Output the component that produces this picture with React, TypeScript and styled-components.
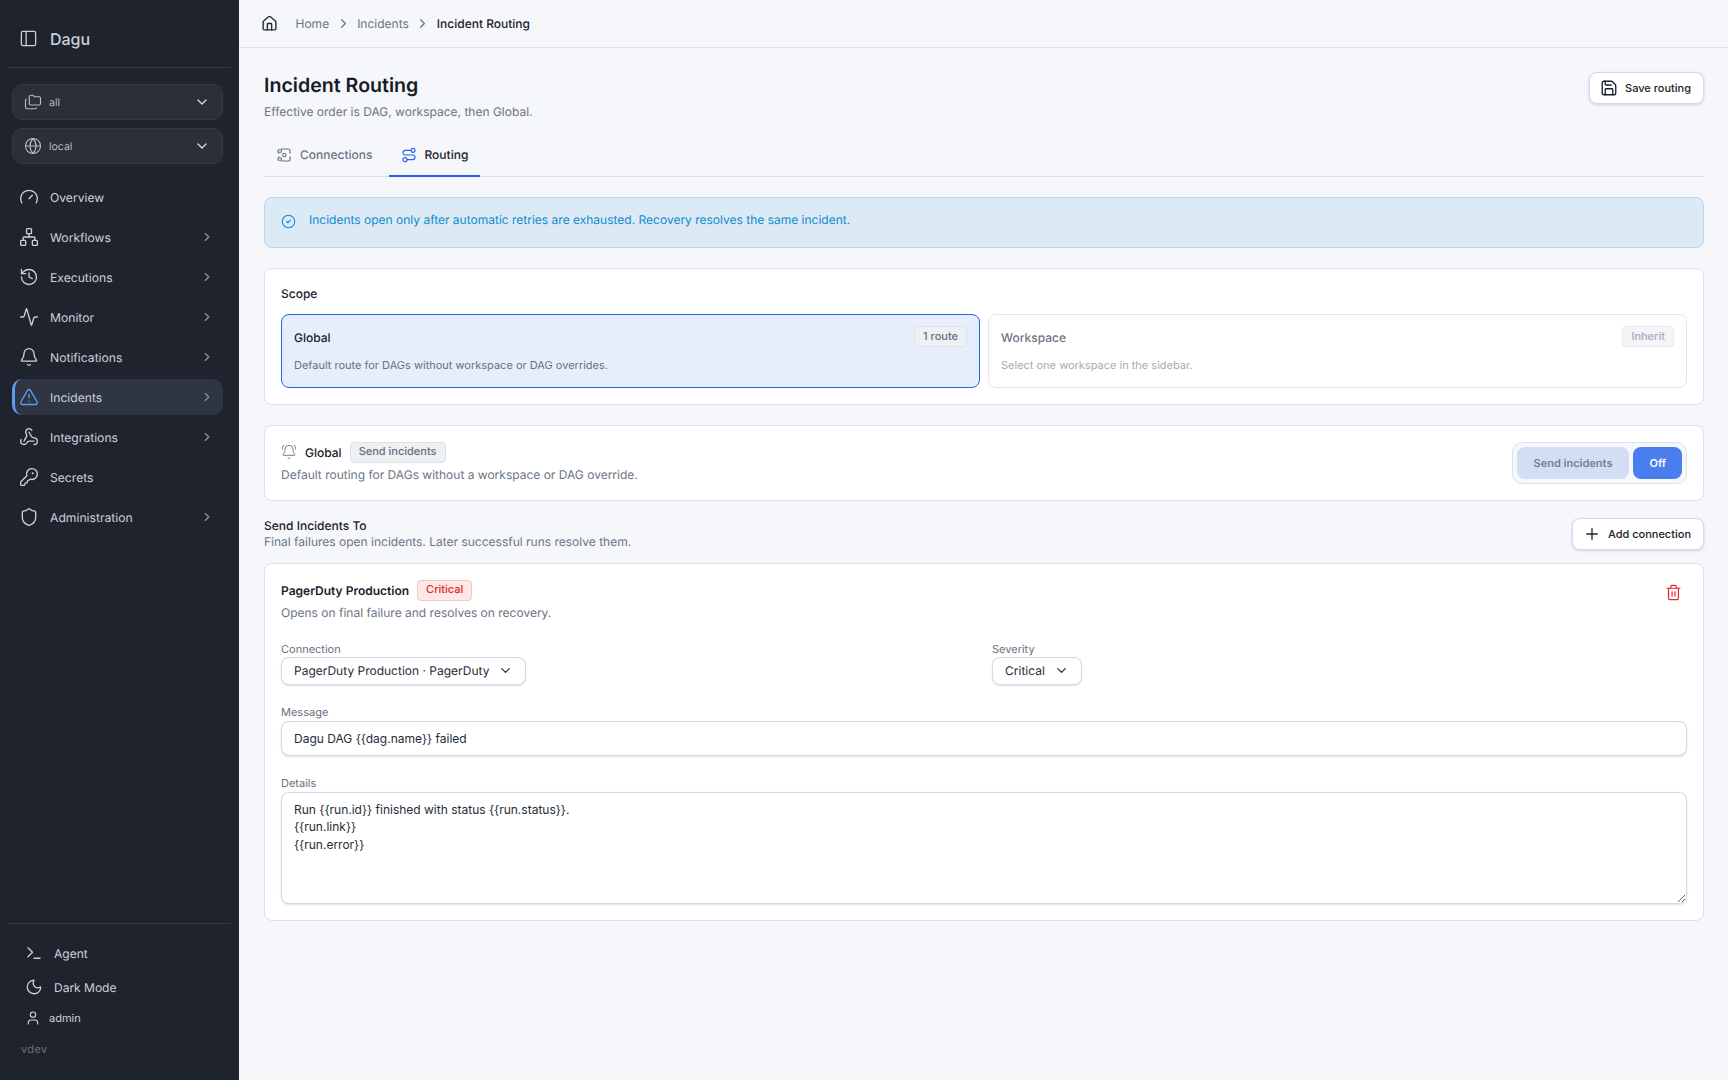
import React from 'react';
import styled, { createGlobalStyle } from 'styled-components';
import {
  Activity, Bell, BellRing, ChevronDown, ChevronRight, CircleCheck, Folders, Gauge, Globe, History, House,
  KeyRound, Moon, Network, PanelLeft, Plus, Route, Save, Shield, Terminal, Trash2, TriangleAlert, User, Webhook,
} from 'lucide-react';

const GlobalStyle = createGlobalStyle`
  * { box-sizing: border-box; }
  html, body { margin: 0; height: 100%; }
  body {
    font-family: Inter, "Liberation Sans", sans-serif;
    background: #f5f7fb;
    color: #171c26;
    text-rendering: geometricPrecision;
    -webkit-font-smoothing: antialiased;
  }
`;

const Layout = styled.div`
  display: flex;
  height: 1080px;
  overflow: hidden;
`;

const Sidebar = styled.aside`
  width: 239px;
  flex: none;
  background: #1f232d;
  color: #cdd1d9;
  display: flex;
  flex-direction: column;
`;

const Brand = styled.div`
  height: 68px;
  flex: none;
  margin: 0 8px;
  padding: 10px 0 0 10.6px;
  display: flex;
  align-items: center;
  gap: 12.4px;
  border-bottom: 1px solid #333844;
  font-size: 16px;
  font-weight: 500;
`;

const SwitcherStack = styled.div`
  display: flex;
  flex-direction: column;
  gap: 8px;
  padding: 16px 16px 0 12px;
`;

const Switcher = styled.div`
  height: 36px;
  padding: 0 12px 0 11px;
  display: flex;
  align-items: center;
  gap: 7px;
  background: #2a2f3a;
  border: 1px solid #343945;
  border-radius: 10px;
  font-size: 10.5px;
  color: #b8bcc5;
  svg:last-child { margin-left: auto; color: #d5d8de; }
`;

const Nav = styled.nav`
  display: flex;
  flex-direction: column;
  gap: 4px;
  padding: 15px 16px 0 12px;
`;

const NavItem = styled.div<{ $active?: boolean }>`
  height: 36px;
  padding: 0 9px 0 4px;
  display: flex;
  align-items: center;
  gap: 11px;
  font-size: 12.15px;
  border-radius: 10px;
  border-left: 3px solid ${(p) => (p.$active ? '#5d9cf0' : 'transparent')};
  color: #cdd1d9;
  background: ${(p) => (p.$active ? '#2f3542' : 'transparent')};
  > svg:first-child { color: ${(p) => (p.$active ? '#5d9cf0' : '#cdd1d9')}; }
`;

const NavArrow = styled(ChevronRight)`
  margin-left: auto;
  color: #8d919b;
`;

const SideFooter = styled.div`
  margin: auto 8px 0;
  padding: 12px 0 24px 17px;
  border-top: 1px solid #333844;
  display: flex;
  flex-direction: column;
`;

const FooterItem = styled.div`
  height: 34px;
  display: flex;
  align-items: center;
  gap: 11px;
  font-size: 12px;
`;

const UserRow = styled.div`
  height: 28px;
  display: flex;
  align-items: center;
  gap: 8px;
  font-size: 11px;
`;

const Version = styled.div`
  margin: 10px 0 0 -4px;
  font-size: 11px;
  letter-spacing: 0.4px;
  color: #6c707a;
`;

const Main = styled.main`
  flex: 1;
  min-width: 0;
  display: flex;
  flex-direction: column;
`;

const TopBar = styled.header`
  height: 48px;
  flex: none;
  padding: 0 22px;
  display: flex;
  align-items: center;
  border-bottom: 1px solid #dfe3ec;
  font-size: 12px;
  color: #6c7585;
`;

const Crumb = styled.span<{ $current?: boolean }>`
  font-weight: ${(p) => (p.$current ? 500 : 400)};
  color: ${(p) => (p.$current ? '#1b212c' : '#6c7585')};
`;

const CrumbArrow = styled(ChevronRight)`
  margin: 0 6.5px;
  color: #6c7585;
`;

const HomeIcon = styled(House)`
  margin-right: 17.5px;
  color: #262c38;
`;

const Content = styled.div`
  padding: 24px 24px 0 25px;
  display: flex;
  flex-direction: column;
`;

const PageHead = styled.div`
  display: flex;
  justify-content: space-between;
  align-items: flex-start;
`;

const Title = styled.h1`
  margin: 0;
  font-size: 19.6px;
  line-height: 26px;
  font-weight: 600;
  color: #171c26;
`;

const Subtitle = styled.p`
  margin: 6px 0 0;
  font-size: 12px;
  line-height: 16px;
  color: #6c7585;
`;

const Button = styled.button`
  height: 32px;
  padding: 0 12px 0 10px;
  display: inline-flex;
  align-items: center;
  gap: 7px;
  background: #fff;
  border: 1px solid #d3d9e6;
  border-radius: 8px;
  box-shadow: 0 1px 3px rgba(40, 55, 90, 0.18);
  font: 450 11px Inter, "Liberation Sans", sans-serif;
  color: #1b212c;
`;

const Tabs = styled.div`
  margin-top: 14px;
  height: 43px;
  display: flex;
  border-bottom: 1px solid #d9dfe9;
`;

const Tab = styled.div<{ $active?: boolean }>`
  height: 43px;
  padding: 0 12px;
  display: flex;
  align-items: center;
  gap: 8px;
  font-size: 12px;
  font-weight: 500;
  margin-right: ${(p) => (p.$active ? 0 : '4px')};
  color: ${(p) => (p.$active ? '#1b212c' : '#6c7585')};
  border-bottom: ${(p) => (p.$active ? '2px solid #2563eb' : '2px solid transparent')};
  svg { color: ${(p) => (p.$active ? '#2563eb' : '#6c7585')}; }
`;

const Notice = styled.div`
  margin-top: 20px;
  height: 50.5px;
  padding: 14px 16px;
  display: flex;
  gap: 13px;
  background: #dceaf6;
  border: 1px solid #b6d7ee;
  border-radius: 8px;
  font-size: 12px;
  line-height: 16px;
  color: #0f8bd0;
  svg { margin-top: 2px; flex: none; }
`;

const Card = styled.section`
  background: #fff;
  border: 1px solid #dbe0ea;
  border-radius: 8px;
`;

const ScopeCard = styled(Card)`
  margin-top: 20.5px;
  height: 136.5px;
  padding: 16.5px 16px 16px;
`;

const CardLabel = styled.div`
  font-size: 12px;
  line-height: 16px;
  font-weight: 550;
  color: #1b212c;
`;

const ScopeGrid = styled.div`
  margin-top: 12px;
  display: grid;
  grid-template-columns: 1fr 1fr;
  gap: 8px;
`;

const ScopeOption = styled.div<{ $selected?: boolean }>`
  height: 74px;
  padding: 12px;
  border-radius: 8px;
  border: 1px solid ${(p) => (p.$selected ? '#2563eb' : '#e3e7ef')};
  background: ${(p) => (p.$selected ? '#e6edfb' : '#fff')};
`;

const ScopeTop = styled.div`
  display: flex;
  justify-content: space-between;
  align-items: flex-start;
`;

const ScopeName = styled.div<{ $muted?: boolean }>`
  margin-top: 3px;
  font-size: 12px;
  line-height: 16px;
  font-weight: 500;
  color: ${(p) => (p.$muted ? '#6f7480' : '#1b212c')};
`;

const ScopeText = styled.div<{ $muted?: boolean }>`
  margin-top: 10.5px;
  font-size: 11px;
  line-height: 14px;
  color: ${(p) => (p.$muted ? '#a5abb7' : '#68717f')};
`;

const Badge = styled.span<{ $tone?: 'muted' | 'red' }>`
  display: inline-flex;
  align-items: center;
  height: 21px;
  padding: 0 8px 2px;
  border-radius: 4px;
  font-size: 11px;
  font-weight: 450;
  border: 1px solid ${(p) => (p.$tone === 'red' ? '#f8c4c4' : p.$tone === 'muted' ? '#e7eaf0' : '#dce2e8')};
  background: ${(p) => (p.$tone === 'red' ? '#fde8e8' : p.$tone === 'muted' ? '#f3f5f8' : '#edf1f4')};
  color: ${(p) => (p.$tone === 'red' ? '#e5252a' : p.$tone === 'muted' ? '#a5abb7' : '#64707e')};
`;

const ScopeBadge = styled(Badge)`
  margin-top: -0.5px;
`;

const GlobalCard = styled(Card)`
  margin-top: 20.5px;
  height: 75.5px;
  padding: 0 16px;
  display: flex;
  align-items: center;
  justify-content: space-between;
`;

const GlobalInfo = styled.div`
  padding-bottom: 1px;
`;

const GlobalRow = styled.div`
  display: flex;
  align-items: center;
  gap: 8px;
  font-size: 12px;
  font-weight: 550;
  svg { color: #6c7585; }
`;

const SmallMuted = styled.div`
  margin-top: 4px;
  font-size: 12px;
  line-height: 16px;
  color: #6c7585;
`;

const Toggle = styled.div`
  height: 42px;
  padding: 4px;
  display: flex;
  gap: 4px;
  border: 1px solid #dde2ec;
  border-radius: 10px;
  background: #f5f7fb;
`;

const ToggleOption = styled.div<{ $on?: boolean }>`
  padding: 0 ${(p) => (p.$on ? '16px' : '17px')};
  display: flex;
  align-items: center;
  border-radius: 8px;
  font-size: 11px;
  font-weight: 600;
  background: ${(p) => (p.$on ? '#4a7eee' : '#d3def5')};
  color: ${(p) => (p.$on ? '#fff' : '#737f95')};
`;

const RouteHead = styled.div`
  margin-top: 15px;
  height: 36px;
  display: flex;
  align-items: center;
  justify-content: space-between;
`;

const RouteTitle = styled.div`
  font-size: 12px;
  line-height: 16px;
  font-weight: 550;
  color: #1b212c;
`;

const RouteSub = styled.div`
  font-size: 12px;
  line-height: 16px;
  color: #6c7585;
`;

const RouteCard = styled(Card)`
  margin-top: 11px;
  padding: 16px;
`;

const RouteTop = styled.div`
  display: flex;
  justify-content: space-between;
  align-items: flex-start;
`;

const RouteName = styled.div`
  display: flex;
  align-items: center;
  gap: 8px;
  font-size: 12px;
  font-weight: 600;
  color: #1b212c;
`;

const TrashIcon = styled(Trash2)`
  margin: 4.5px 5.5px 0 0;
  color: #e5252a;
`;

const FieldRow = styled.div`
  margin-top: 21.2px;
  display: grid;
  grid-template-columns: 711px 1fr;
`;

const Field = styled.div`
  display: flex;
  flex-direction: column;
  margin-top: 20px;
`;

const FieldLabel = styled.label`
  display: block;
  font-size: 11px;
  line-height: 14px;
  color: #68717f;
`;

const Select = styled.div`
  width: fit-content;
  height: 28px;
  margin-top: 1px;
  padding: 0 12px;
  display: flex;
  align-items: center;
  gap: 9px;
  background: #fff;
  border: 1px solid #d3d9e6;
  border-radius: 8px;
  box-shadow: 0 1px 2px rgba(40, 55, 90, 0.16);
  font-size: 12px;
  color: #262c38;
`;

const TextInput = styled.input`
  width: 100%;
  height: 35px;
  margin-top: 2px;
  padding: 0 12px;
  background: #fff;
  border: 1px solid #d3d9e6;
  border-radius: 8px;
  box-shadow: 0 1px 2px rgba(40, 55, 90, 0.16);
  font: 12px Inter, "Liberation Sans", sans-serif;
  color: #262c38;
`;

const TextArea = styled.textarea`
  display: block;
  width: 100%;
  height: 112px;
  margin-top: 2px;
  padding: 8px 12px;
  background: #fff;
  border: 1px solid #d3d9e6;
  border-radius: 8px;
  box-shadow: 0 1px 2px rgba(40, 55, 90, 0.16);
  font: 12px/17.5px Inter, "Liberation Sans", sans-serif;
  color: #262c38;
`;

const ConnectionsIcon = () => (
  <svg width="16" height="16" viewBox="0 0 24 24" fill="none" stroke="currentColor" strokeWidth="1.6" strokeLinecap="round" strokeLinejoin="round">
    <path d="M8 3h11a2 2 0 0 1 2 2v3" />
    <path d="M21 16v3a2 2 0 0 1-2 2H8" />
    <rect x="3" y="4" width="5" height="4" rx="1" />
    <rect x="3" y="16" width="5" height="4" rx="1" />
    <path d="M4 8v1.5M4 16v-1.5M21 8v1.5M21 16v-1.5" />
    <circle cx="12.5" cy="12" r="2.5" />
  </svg>
);

const navItems = [
  { label: 'Overview', icon: Gauge },
  { label: 'Workflows', icon: Network, more: true },
  { label: 'Executions', icon: History, more: true },
  { label: 'Monitor', icon: Activity, more: true },
  { label: 'Notifications', icon: Bell, more: true },
  { label: 'Incidents', icon: TriangleAlert, more: true, active: true },
  { label: 'Integrations', icon: Webhook, more: true },
  { label: 'Secrets', icon: KeyRound },
  { label: 'Administration', icon: Shield, more: true },
];

export default function App() {
  return (
    <Layout>
      <GlobalStyle />
      <Sidebar>
        <Brand>
          <PanelLeft size={19} strokeWidth={1.6} />
          Dagu
        </Brand>
        <SwitcherStack>
          <Switcher>
            <Folders size={18} strokeWidth={1.5} />
            all
            <ChevronDown size={16} />
          </Switcher>
          <Switcher>
            <Globe size={18} strokeWidth={1.5} />
            local
            <ChevronDown size={16} />
          </Switcher>
        </SwitcherStack>
        <Nav>
          {navItems.map(({ label, icon: Icon, more, active }) => (
            <NavItem key={label} $active={active}>
              <Icon size={20} strokeWidth={1.6} />
              {label}
              {more && <NavArrow size={14} />}
            </NavItem>
          ))}
        </Nav>
        <SideFooter>
          <FooterItem>
            <Terminal size={18} strokeWidth={1.7} />
            Agent
          </FooterItem>
          <FooterItem>
            <Moon size={18} strokeWidth={1.7} />
            Dark Mode
          </FooterItem>
          <UserRow>
            <User size={16} strokeWidth={1.7} />
            admin
          </UserRow>
          <Version>vdev</Version>
        </SideFooter>
      </Sidebar>
      <Main>
        <TopBar>
          <HomeIcon size={17} strokeWidth={2} />
          <Crumb>Home</Crumb>
          <CrumbArrow size={15} />
          <Crumb>Incidents</Crumb>
          <CrumbArrow size={15} />
          <Crumb $current>Incident Routing</Crumb>
        </TopBar>
        <Content>
          <PageHead>
            <div>
              <Title>Incident Routing</Title>
              <Subtitle>Effective order is DAG, workspace, then Global.</Subtitle>
            </div>
            <Button>
              <Save size={18} strokeWidth={1.8} />
              Save routing
            </Button>
          </PageHead>
          <Tabs>
            <Tab>
              <ConnectionsIcon />
              Connections
            </Tab>
            <Tab $active>
              <Route size={16} strokeWidth={1.7} />
              Routing
            </Tab>
          </Tabs>
          <Notice>
            <CircleCheck size={15} strokeWidth={1.7} />
            Incidents open only after automatic retries are exhausted. Recovery resolves the same incident.
          </Notice>
          <ScopeCard>
            <CardLabel>Scope</CardLabel>
            <ScopeGrid>
              <ScopeOption $selected>
                <ScopeTop>
                  <ScopeName>Global</ScopeName>
                  <ScopeBadge>1 route</ScopeBadge>
                </ScopeTop>
                <ScopeText>Default route for DAGs without workspace or DAG overrides.</ScopeText>
              </ScopeOption>
              <ScopeOption>
                <ScopeTop>
                  <ScopeName $muted>Workspace</ScopeName>
                  <ScopeBadge $tone="muted">Inherit</ScopeBadge>
                </ScopeTop>
                <ScopeText $muted>Select one workspace in the sidebar.</ScopeText>
              </ScopeOption>
            </ScopeGrid>
          </ScopeCard>
          <GlobalCard>
            <GlobalInfo>
              <GlobalRow>
                <BellRing size={16} strokeWidth={1.4} />
                Global
                <Badge>Send incidents</Badge>
              </GlobalRow>
              <SmallMuted>Default routing for DAGs without a workspace or DAG override.</SmallMuted>
            </GlobalInfo>
            <Toggle>
              <ToggleOption>Send incidents</ToggleOption>
              <ToggleOption $on>Off</ToggleOption>
            </Toggle>
          </GlobalCard>
          <RouteHead>
            <div>
              <RouteTitle>Send Incidents To</RouteTitle>
              <RouteSub>Final failures open incidents. Later successful runs resolve them.</RouteSub>
            </div>
            <Button>
              <Plus size={18} strokeWidth={1.8} />
              Add connection
            </Button>
          </RouteHead>
          <RouteCard>
            <RouteTop>
              <div>
                <RouteName>
                  PagerDuty Production
                  <Badge $tone="red">Critical</Badge>
                </RouteName>
                <SmallMuted>Opens on final failure and resolves on recovery.</SmallMuted>
              </div>
              <TrashIcon size={17} strokeWidth={1.7} />
            </RouteTop>
            <FieldRow>
              <div>
                <FieldLabel>Connection</FieldLabel>
                <Select>
                  PagerDuty Production · PagerDuty
                  <ChevronDown size={15} />
                </Select>
              </div>
              <div>
                <FieldLabel>Severity</FieldLabel>
                <Select>
                  Critical
                  <ChevronDown size={15} />
                </Select>
              </div>
            </FieldRow>
            <Field>
              <FieldLabel>Message</FieldLabel>
              <TextInput readOnly value="Dagu DAG {{dag.name}} failed" />
            </Field>
            <Field>
              <FieldLabel>Details</FieldLabel>
              <TextArea readOnly value={'Run {{run.id}} finished with status {{run.status}}.\n{{run.link}}\n{{run.error}}'} />
            </Field>
          </RouteCard>
        </Content>
      </Main>
    </Layout>
  );
}
